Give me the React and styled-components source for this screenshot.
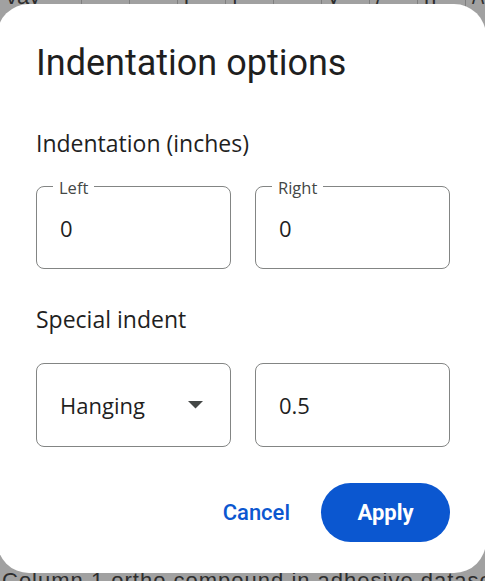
import React from "react";
import styled, { createGlobalStyle } from "styled-components";

const GlobalStyle = createGlobalStyle`
  html, body {
    margin: 0;
    padding: 0;
    background: #a1a1a1;
    overflow: hidden;
  }
  body {
    font-family: "Open Sans", Roboto, "Liberation Sans", sans-serif;
  }
`;

const Page = styled.div`
  position: relative;
  width: 485px;
  height: 581px;
  overflow: hidden;
  background: #a1a1a1;
`;

const BackdropRow = styled.div`
  position: absolute;
  left: 0;
  right: 0;
  display: flex;
  color: #2e2e2e;
  font-family: "Liberation Sans", sans-serif;
  font-size: 22px;
  line-height: 22px;
  white-space: nowrap;
  top: ${(p) => p.$top}px;
`;

const BackdropCell = styled.div`
  flex: 0 0 ${(p) => p.$w}px;
  border-right: 1px solid #7f7f7f;
  padding-left: 6px;
  box-sizing: border-box;
  height: 40px;
  overflow: hidden;
`;

const BottomText = styled.div`
  padding-left: 2px;
  letter-spacing: 1px;
`;

const Dialog = styled.div`
  position: relative;
  width: 489px;
  margin: 4px 0 0 -3px;
  height: 569px;
  box-sizing: border-box;
  padding: 37px 36px 0 39px;
  background: #ffffff;
  border-radius: 32px;
  display: flex;
  flex-direction: column;
`;

const Title = styled.h1`
  margin: 0;
  font-family: Roboto, "Liberation Sans", sans-serif;
  font-size: 36px;
  line-height: 44px;
  font-weight: 400;
  color: #1f1f1f;
`;

const SectionTitle = styled.h2`
  margin: ${(p) => p.$mt}px 0 0;
  font-size: 23px;
  line-height: 32px;
  font-weight: 400;
  color: #1f1f1f;
`;

const FieldRow = styled.div`
  display: grid;
  grid-template-columns: 1fr 1fr;
  gap: 24px;
  margin-top: ${(p) => p.$mt}px;
`;

const Field = styled.div`
  position: relative;
  height: ${(p) => p.$h}px;
  box-sizing: border-box;
  border: 1px solid #838584;
  border-radius: 8px;
  display: flex;
  align-items: center;
  padding: 0 27px 0 23px;
  color: #1f1f1f;
  font-size: 22px;
`;

const FieldLabel = styled.span`
  position: absolute;
  top: -9px;
  left: 16px;
  padding: 0 6px;
  background: #ffffff;
  font-size: 16.5px;
  line-height: 20px;
  color: #444746;
`;

const Value = styled.span`
  flex: 1;
`;

const Caret = styled.svg`
  width: 15px;
  height: 8px;
  flex: none;
`;

const Actions = styled.div`
  display: flex;
  justify-content: flex-end;
  align-items: center;
  gap: 15px;
  margin-top: 36px;
`;

const Button = styled.button`
  border: none;
  font-family: Roboto, "Liberation Sans", sans-serif;
  font-size: 22px;
  height: 59px;
  border-radius: 30px;
  cursor: pointer;
  padding: 0 ${(p) => (p.$primary ? 34 : 16)}px;
  background: ${(p) => (p.$primary ? "#0b57d0" : "transparent")};
  color: ${(p) => (p.$primary ? "#ffffff" : "#0b57d0")};
  font-weight: ${(p) => (p.$primary ? 700 : 500)};
  min-width: ${(p) => (p.$primary ? 129 : 0)}px;
`;

const topCells = [
  { w: 82, t: "vay" },
  { w: 48, t: "•" },
  { w: 48, t: "" },
  { w: 48, t: "ŀ" },
  { w: 48, t: "|" },
  { w: 48, t: "" },
  { w: 48, t: "y" },
  { w: 48, t: "/" },
  { w: 48, t: "ŋ" },
  { w: 48, t: "/\\" },
  { w: 48, t: "ẏ" },
];

export default function App() {
  return (
    <>
      <GlobalStyle />
      <Page>
        <BackdropRow $top={-14}>
          {topCells.map((c, i) => (
            <BackdropCell key={i} $w={c.w}>
              {c.t}
            </BackdropCell>
          ))}
        </BackdropRow>
        <BackdropRow $top={570}>
          <BottomText>Column 1 ortho compound in adhesive datasco</BottomText>
        </BackdropRow>
        <Dialog>
          <Title>Indentation options</Title>
          <SectionTitle $mt={42}>Indentation (inches)</SectionTitle>
          <FieldRow $mt={27}>
            <Field $h={83}>
              <FieldLabel>Left</FieldLabel>
              <Value>0</Value>
            </Field>
            <Field $h={83}>
              <FieldLabel>Right</FieldLabel>
              <Value>0</Value>
            </Field>
          </FieldRow>
          <SectionTitle $mt={34}>Special indent</SectionTitle>
          <FieldRow $mt={28}>
            <Field $h={84}>
              <Value>Hanging</Value>
              <Caret viewBox="0 0 15 8">
                <path d="M0 0 L15 0 L7.5 7.5 Z" fill="#444746" />
              </Caret>
            </Field>
            <Field $h={84}>
              <Value>0.5</Value>
            </Field>
          </FieldRow>
          <Actions>
            <Button>Cancel</Button>
            <Button $primary>Apply</Button>
          </Actions>
        </Dialog>
      </Page>
    </>
  );
}
